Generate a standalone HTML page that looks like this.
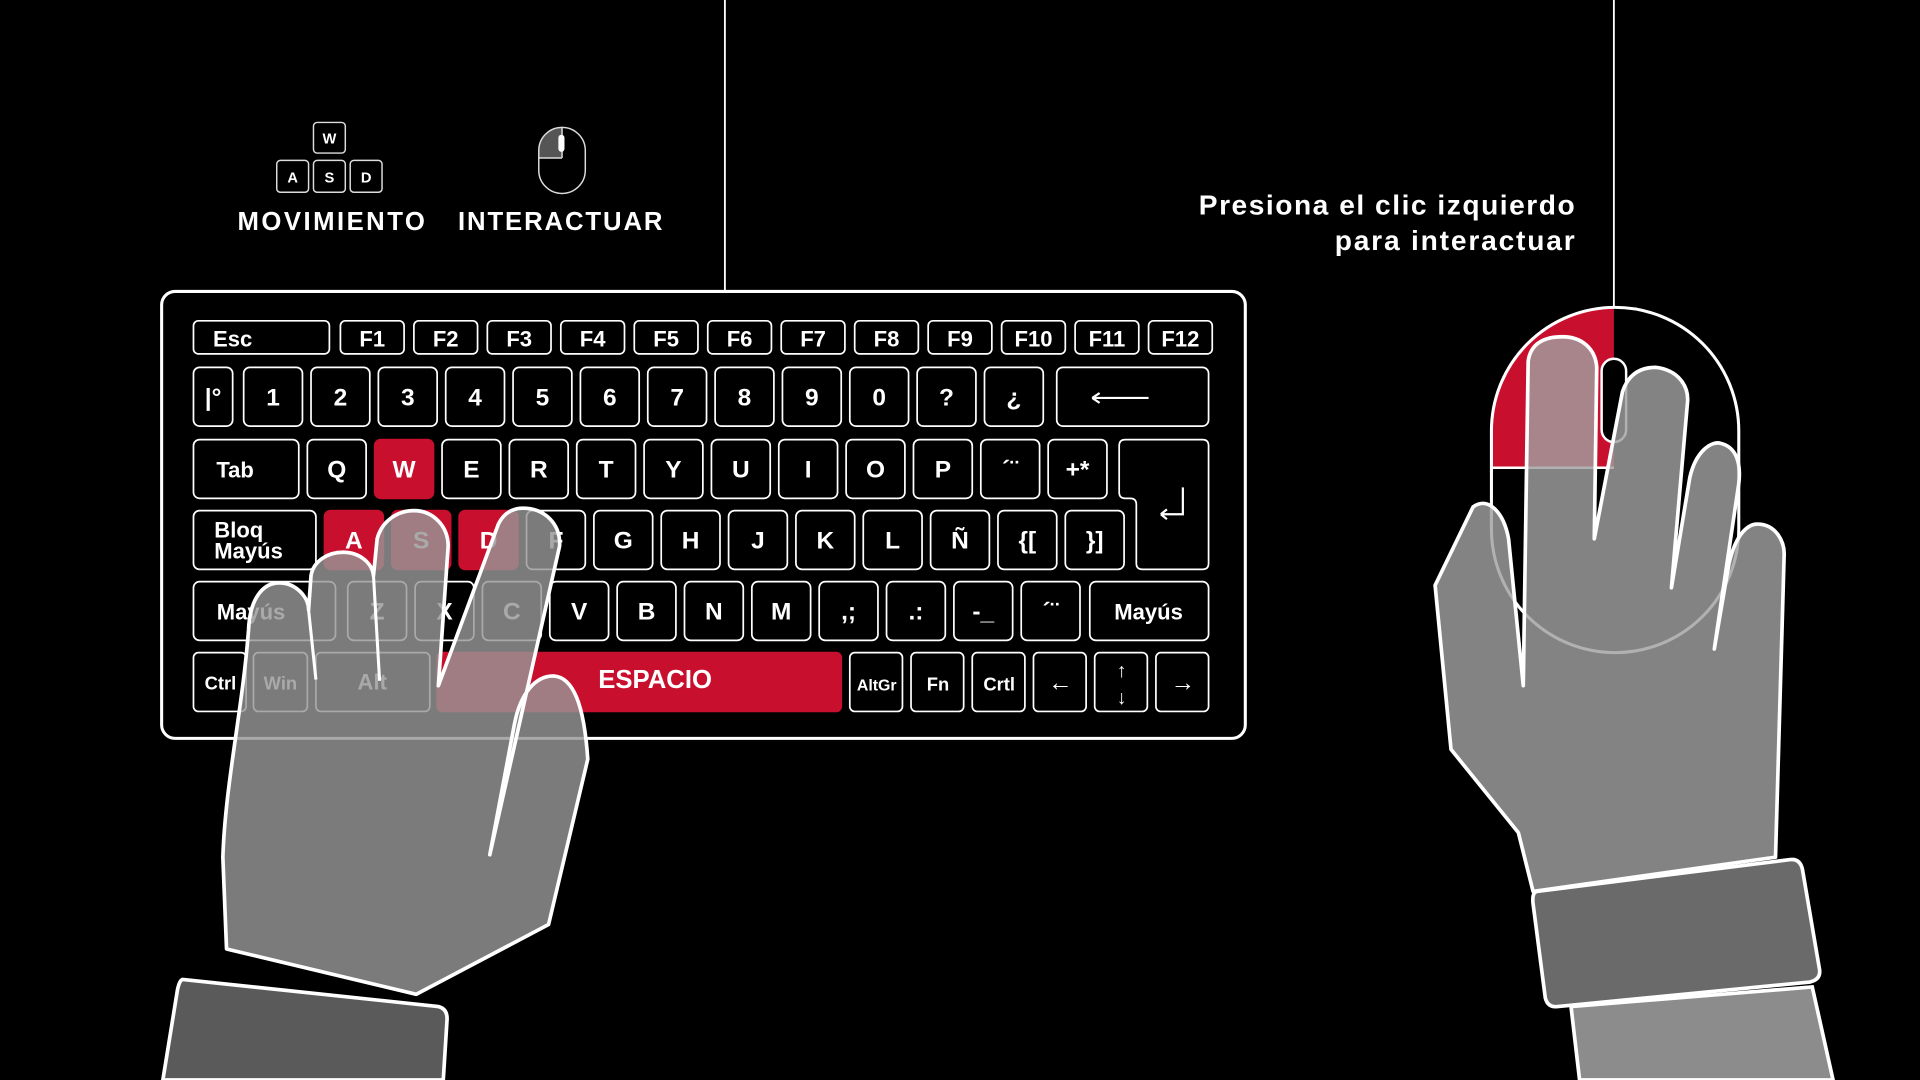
<!DOCTYPE html>
<html><head><meta charset="utf-8"><style>
html,body{margin:0;padding:0;background:#000;}
svg{display:block;}
text{font-family:"Liberation Sans",sans-serif;font-weight:bold;fill:#fff;}
</style></head><body>
<svg width="1920" height="1080" viewBox="0 0 1568 882" xmlns="http://www.w3.org/2000/svg">
<rect width="1568" height="882" fill="#000"/>
<line x1="592" y1="0" x2="592" y2="238" stroke="#fff" stroke-width="1.5"/>
<line x1="1318" y1="0" x2="1318" y2="252" stroke="#fff" stroke-width="1.5"/>

<!-- top icons -->
<g stroke="#ddd" stroke-width="1.2" fill="none">
<rect x="256" y="100" width="26" height="25" rx="3"/>
<rect x="226" y="131" width="26" height="26" rx="3"/>
<rect x="256" y="131" width="26" height="26" rx="3"/>
<rect x="286" y="131" width="26" height="26" rx="3"/>
</g>
<g font-size="12" text-anchor="middle">
<text x="269" y="117">W</text><text x="239" y="149">A</text><text x="269" y="149">S</text><text x="299" y="149">D</text>
</g>
<path d="M459,104 A19,19 0 0 0 440,123 L440,129 L459,129 Z" fill="#555"/>
<rect x="440" y="104" width="38" height="54" rx="19" fill="none" stroke="#ddd" stroke-width="1.2"/>
<line x1="440" y1="129" x2="459" y2="129" stroke="#ddd" stroke-width="1.2"/>
<line x1="459" y1="104" x2="459" y2="129" stroke="#ddd" stroke-width="1.2"/>
<rect x="456" y="110" width="5" height="14" rx="2.5" fill="#fff"/>
<text x="194" y="188" font-size="21" textLength="153" lengthAdjust="spacing">MOVIMIENTO</text>
<text x="374" y="188" font-size="21" textLength="167" lengthAdjust="spacing">INTERACTUAR</text>
<text x="979" y="175" font-size="23" textLength="307" lengthAdjust="spacing" style="font-weight:600">Presiona el clic izquierdo</text>
<text x="1090" y="204" font-size="23" textLength="196" lengthAdjust="spacing" style="font-weight:600">para interactuar</text>

<!-- keyboard -->
<rect x="132" y="238" width="885" height="365" rx="11" fill="#000" stroke="#fff" stroke-width="2.5"/>
<g stroke="#fff" stroke-width="1.4" fill="#000">
<rect x="158" y="262" width="111" height="27" rx="4"/>
<rect x="278" y="262" width="52" height="27" rx="4"/><rect x="338" y="262" width="52" height="27" rx="4"/><rect x="398" y="262" width="52" height="27" rx="4"/><rect x="458" y="262" width="52" height="27" rx="4"/><rect x="518" y="262" width="52" height="27" rx="4"/><rect x="578" y="262" width="52" height="27" rx="4"/><rect x="638" y="262" width="52" height="27" rx="4"/><rect x="698" y="262" width="52" height="27" rx="4"/><rect x="758" y="262" width="52" height="27" rx="4"/><rect x="818" y="262" width="52" height="27" rx="4"/><rect x="878" y="262" width="52" height="27" rx="4"/><rect x="938" y="262" width="52" height="27" rx="4"/>
<rect x="158" y="300" width="32" height="48" rx="5"/>
<rect x="199" y="300" width="48" height="48" rx="5"/><rect x="254" y="300" width="48" height="48" rx="5"/><rect x="309" y="300" width="48" height="48" rx="5"/><rect x="364" y="300" width="48" height="48" rx="5"/><rect x="419" y="300" width="48" height="48" rx="5"/><rect x="474" y="300" width="48" height="48" rx="5"/><rect x="529" y="300" width="48" height="48" rx="5"/><rect x="584" y="300" width="48" height="48" rx="5"/><rect x="639" y="300" width="48" height="48" rx="5"/><rect x="694" y="300" width="48" height="48" rx="5"/><rect x="749" y="300" width="48" height="48" rx="5"/><rect x="804" y="300" width="48" height="48" rx="5"/>
<rect x="863" y="300" width="124" height="48" rx="5"/>
<rect x="158" y="359" width="86" height="48" rx="5"/>
<rect x="251" y="359" width="48" height="48" rx="5"/><rect x="306" y="359" width="48" height="48" rx="5" fill="#c8102e" stroke="#c8102e"/><rect x="361" y="359" width="48" height="48" rx="5"/><rect x="416" y="359" width="48" height="48" rx="5"/><rect x="471" y="359" width="48" height="48" rx="5"/><rect x="526" y="359" width="48" height="48" rx="5"/><rect x="581" y="359" width="48" height="48" rx="5"/><rect x="636" y="359" width="48" height="48" rx="5"/><rect x="691" y="359" width="48" height="48" rx="5"/><rect x="746" y="359" width="48" height="48" rx="5"/><rect x="801" y="359" width="48" height="48" rx="5"/><rect x="856" y="359" width="48" height="48" rx="5"/>
<path d="M919,359 H982 Q987,359 987,364 V460 Q987,465 982,465 H933 Q928,465 928,460 V412 Q928,407 923,407 H919 Q914,407 914,402 V364 Q914,359 919,359 Z"/>
<rect x="158" y="417" width="100" height="48" rx="5"/>
<rect x="265" y="417" width="48" height="48" rx="5" fill="#c8102e" stroke="#c8102e"/><rect x="320" y="417" width="48" height="48" rx="5" fill="#c8102e" stroke="#c8102e"/><rect x="375" y="417" width="48" height="48" rx="5" fill="#c8102e" stroke="#c8102e"/><rect x="430" y="417" width="48" height="48" rx="5"/><rect x="485" y="417" width="48" height="48" rx="5"/><rect x="540" y="417" width="48" height="48" rx="5"/><rect x="595" y="417" width="48" height="48" rx="5"/><rect x="650" y="417" width="48" height="48" rx="5"/><rect x="705" y="417" width="48" height="48" rx="5"/><rect x="760" y="417" width="48" height="48" rx="5"/><rect x="815" y="417" width="48" height="48" rx="5"/><rect x="870" y="417" width="48" height="48" rx="5"/>
<rect x="158" y="475" width="116" height="48" rx="5"/>
<rect x="284" y="475" width="48" height="48" rx="5"/><rect x="339" y="475" width="48" height="48" rx="5"/><rect x="394" y="475" width="48" height="48" rx="5"/><rect x="449" y="475" width="48" height="48" rx="5"/><rect x="504" y="475" width="48" height="48" rx="5"/><rect x="559" y="475" width="48" height="48" rx="5"/><rect x="614" y="475" width="48" height="48" rx="5"/><rect x="669" y="475" width="48" height="48" rx="5"/><rect x="724" y="475" width="48" height="48" rx="5"/><rect x="779" y="475" width="48" height="48" rx="5"/><rect x="834" y="475" width="48" height="48" rx="5"/>
<rect x="890" y="475" width="97" height="48" rx="5"/>
<rect x="158" y="533" width="43" height="48" rx="4"/><rect x="207" y="533" width="44" height="48" rx="4"/><rect x="258" y="533" width="93" height="48" rx="4"/>
<rect x="357" y="533" width="330" height="48" rx="4" fill="#c8102e" stroke="#c8102e"/>
<rect x="694" y="533" width="43" height="48" rx="4"/><rect x="744" y="533" width="43" height="48" rx="4"/><rect x="794" y="533" width="43" height="48" rx="4"/><rect x="844" y="533" width="43" height="48" rx="4"/><rect x="894" y="533" width="43" height="48" rx="4"/><rect x="944" y="533" width="43" height="48" rx="4"/>
</g>
<g font-size="18" text-anchor="middle">
<text x="190" y="283" text-anchor="middle">Esc</text>
<text x="304" y="283">F1</text><text x="364" y="283">F2</text><text x="424" y="283">F3</text><text x="484" y="283">F4</text><text x="544" y="283">F5</text><text x="604" y="283">F6</text><text x="664" y="283">F7</text><text x="724" y="283">F8</text><text x="784" y="283">F9</text><text x="844" y="283">F10</text><text x="904" y="283">F11</text><text x="964" y="283">F12</text>
<g font-size="20">
<text x="174" y="331">|°</text><text x="223" y="331">1</text><text x="278" y="331">2</text><text x="333" y="331">3</text><text x="388" y="331">4</text><text x="443" y="331">5</text><text x="498" y="331">6</text><text x="553" y="331">7</text><text x="608" y="331">8</text><text x="663" y="331">9</text><text x="718" y="331">0</text><text x="773" y="331">?</text><text x="828" y="331">¿</text>
<text x="192" y="390" font-size="18">Tab</text>
<text x="275" y="390">Q</text><text x="330" y="390">W</text><text x="385" y="390">E</text><text x="440" y="390">R</text><text x="495" y="390">T</text><text x="550" y="390">Y</text><text x="605" y="390">U</text><text x="660" y="390">I</text><text x="715" y="390">O</text><text x="770" y="390">P</text><text x="825" y="390">´¨</text><text x="880" y="390">+*</text>
<text x="289" y="448">A</text><text x="344" y="448">S</text><text x="399" y="448">D</text><text x="454" y="448">F</text><text x="509" y="448">G</text><text x="564" y="448">H</text><text x="619" y="448">J</text><text x="674" y="448">K</text><text x="729" y="448">L</text><text x="784" y="448">Ñ</text><text x="839" y="448">{[</text><text x="894" y="448">}]</text>
<text x="308" y="506">Z</text><text x="363" y="506">X</text><text x="418" y="506">C</text><text x="473" y="506">V</text><text x="528" y="506">B</text><text x="583" y="506">N</text><text x="638" y="506">M</text><text x="693" y="506">,;</text><text x="748" y="506">.:</text><text x="803" y="506">-_</text><text x="858" y="506">´¨</text>
</g>
<text x="205" y="506">Mayús</text><text x="938" y="506">Mayús</text>
<text x="175" y="439" text-anchor="start">Bloq</text><text x="175" y="456" text-anchor="start">Mayús</text>
<text x="180" y="563" font-size="15">Ctrl</text><text x="229" y="563" font-size="15">Win</text><text x="304" y="563">Alt</text>
<text x="535" y="562" font-size="21">ESPACIO</text>
<text x="716" y="564" font-size="13">AltGr</text><text x="766" y="564" font-size="15">Fn</text><text x="816" y="564" font-size="15">Crtl</text>
<text x="866" y="564" font-size="20">←</text><text x="966" y="564" font-size="20">→</text>
<text x="916" y="553" font-size="16">↑</text><text x="916" y="575" font-size="16">↓</text>
</g>
<path d="M892,325 H938 M892,325 l6,-4 M892,325 l6,4" stroke="#fff" stroke-width="1.8" fill="none"/>
<path d="M966,398 V420 H948 M948,420 l5,-4 M948,420 l5,4" stroke="#fff" stroke-width="1.8" fill="none"/>

<!-- left hand -->
<path d="M185,775 L182,700 C184,640 198,580 203,514 C204,490 214,476 228,476 C242,476 252,488 252,498 L254,470 C256,458 268,451 280,451 C294,451 304,460 305,470 L308,440 C312,425 325,417 338,417 C354,417 366,430 366,446 L358,560 L407,428 C412,418 420,415 427,415 C445,415 458,428 457,446 L400,698 L420,592 C425,565 438,552 452,552 C468,553 477,575 480,620 L448,755 L340,812 Z" fill="rgba(150,150,150,0.82)" stroke="#fff" stroke-width="3" stroke-linejoin="round"/>
<path d="M252,498 L258,555 M305,470 L310,556" stroke="#fff" stroke-width="2.5" fill="none"/>
<path d="M150,800 L358,822 Q366,824 365,834 L362,882 L133,882 L145,808 Q147,799 150,800 Z" fill="#5a5a5a" stroke="#fff" stroke-width="3"/>

<!-- mouse -->
<path d="M1318,252 A100,100 0 0 0 1218,352 L1218,382 L1318,382 Z" fill="#c8102e"/>
<path d="M1218,352 A100,100 0 0 1 1420,352 L1420,432 A101,101 0 0 1 1218,432 Z" fill="none" stroke="#fff" stroke-width="2.5"/>
<line x1="1218" y1="382" x2="1318" y2="382" stroke="#fff" stroke-width="2"/>
<rect x="1308" y="293" width="20" height="68" rx="10" fill="#000" stroke="#fff" stroke-width="2"/>

<!-- right hand -->
<path d="M1252,728 L1240,680 L1185,612 L1172,478 L1203,414 C1215,405 1228,418 1232,440 L1244,560 L1248,295 C1250,280 1262,275 1276,275 C1292,275 1303,285 1304,300 L1302,440 L1325,320 C1330,305 1340,300 1352,300 C1370,302 1380,315 1378,330 L1365,480 L1380,390 C1385,368 1398,360 1405,362 C1418,365 1422,378 1420,395 L1400,530 L1412,460 C1418,435 1428,428 1435,428 C1450,428 1458,442 1457,455 L1450,700 Z" fill="rgba(160,160,160,0.82)" stroke="#fff" stroke-width="3" stroke-linejoin="round"/>
<path d="M1255,728 L1462,702 Q1470,701 1472,710 L1486,792 Q1487,800 1478,802 L1272,822 Q1264,823 1262,815 L1252,738 Q1251,729 1255,728 Z" fill="#6a6a6a" stroke="#fff" stroke-width="3"/>
<path d="M1283,822 L1480,806 L1497,882 L1290,882 Z" fill="#8c8c8c" stroke="#fff" stroke-width="3"/>
</svg>
</body></html>
